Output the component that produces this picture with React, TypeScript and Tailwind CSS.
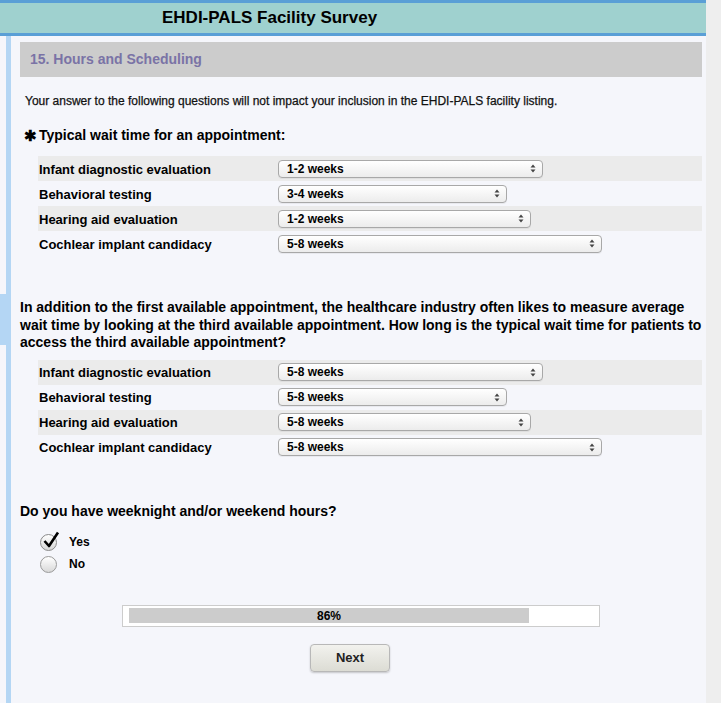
const font = { fontFamily: '"Liberation Sans", Arial, sans-serif' };

const firstSet = [
  { label: "Infant diagnostic evaluation", value: "1-2 weeks", w: "w-[265px]" },
  { label: "Behavioral testing", value: "3-4 weeks", w: "w-[229px]" },
  { label: "Hearing aid evaluation", value: "1-2 weeks", w: "w-[253px]" },
  { label: "Cochlear implant candidacy", value: "5-8 weeks", w: "w-[324px]" },
];

const secondSet = [
  { label: "Infant diagnostic evaluation", value: "5-8 weeks", w: "w-[265px]" },
  { label: "Behavioral testing", value: "5-8 weeks", w: "w-[229px]" },
  { label: "Hearing aid evaluation", value: "5-8 weeks", w: "w-[253px]" },
  { label: "Cochlear implant candidacy", value: "5-8 weeks", w: "w-[324px]" },
];

function FakeSelect({ value, w }: { value: string; w: string }) {
  return (
    <div
      className={`${w} flex h-[18px] items-center justify-between rounded-[4px] border border-[#a8a8a8] bg-gradient-to-b from-white to-[#ececec] pl-[8px] pr-[6px] shadow-[0_1px_0_rgba(0,0,0,0.05)]`}
    >
      <span className="text-[12px] font-bold leading-none text-black">{value}</span>
      <svg width="6" height="9" viewBox="0 0 6 9" className="text-[#444]">
        <path d="M3 0.5 L5.5 3.5 H0.5 Z" fill="currentColor" />
        <path d="M3 8.5 L5.5 5.5 H0.5 Z" fill="currentColor" />
      </svg>
    </div>
  );
}

function Matrix({ rows }: { rows: typeof firstSet }) {
  return (
    <div className="ml-[18px] flex flex-col">
      {rows.map((r, i) => (
        <div
          key={r.label}
          className={`flex h-[25px] items-center ${i % 2 === 0 ? "bg-[#ebebeb]" : ""}`}
        >
          <div className="w-[240px] pl-[1px] pt-[2px] text-[13px] font-bold text-black">{r.label}</div>
          <FakeSelect value={r.value} w={r.w} />
        </div>
      ))}
    </div>
  );
}

export default function App() {
  return (
    <div className="flex min-h-[703px] w-[721px] bg-[#eeeeee]" style={font}>
      <div className="flex w-[706px] flex-col bg-[#f5f6fb]">
        <header className="flex h-[36px] items-center border-y-[3px] border-[#5a9fd6] bg-[#9fd1cf] pl-[162px]">
          <h1 className="text-[17px] font-bold text-black">EHDI-PALS Facility Survey</h1>
        </header>

        <div className="flex flex-1">
          {/* left gutter */}
          <div className="flex w-[11px]">
            <div className="flex w-[6px] flex-col">
              <div className="h-[258px]" />
              <div className="h-[51px] bg-[#b4d6f4]" />
            </div>
            <div className="w-[5px] bg-[#b4d6f4]" />
          </div>

          <main className="flex flex-1 flex-col pl-[9px] pr-[4px]">
            <div className="mt-[6px] flex h-[35px] items-center bg-[#cccccc] pl-[10px]">
              <h2 className="text-[14px] font-bold text-[#7a73a6]">15. Hours and Scheduling</h2>
            </div>

            <p className="mt-[17px] pl-[5px] text-[12px] leading-[15px] text-[#111] [-webkit-text-stroke:0.25px_#111]">
              Your answer to the following questions will not impact your inclusion in the EHDI-PALS facility listing.
            </p>

            <div className="mt-[18px] flex items-center pl-[4px] text-[14px] font-bold leading-[17px] text-black">
              <span className="mr-[2px] text-[15px]">✱</span>
              <span>Typical wait time for an appointment:</span>
            </div>

            <div className="mt-[12px]">
              <Matrix rows={firstSet} />
            </div>

            <p className="mt-[43px] text-[14px] font-bold leading-[17.5px] text-black">
              In addition to the first available appointment, the healthcare industry often likes to measure average
              <br />
              wait time by looking at the third available appointment. How long is the typical wait time for patients to
              <br />
              access the third available appointment?
            </p>

            <div className="mt-[8px]">
              <Matrix rows={secondSet} />
            </div>

            <p className="mt-[43px] text-[14px] font-bold leading-[17px] text-black">
              Do you have weeknight and/or weekend hours?
            </p>

            <div className="ml-[20px] mt-[14px] flex flex-col gap-[5px]">
              <label className="flex h-[17px] items-center">
                <span className="relative flex h-[17px] w-[17px] items-center justify-center rounded-full border border-[#8a8a8a] bg-gradient-to-b from-white to-[#d6d6d6]">
                  <svg
                    width="18"
                    height="18"
                    viewBox="0 0 18 18"
                    className="absolute left-[1px] top-[-4px]"
                  >
                    <path d="M2.5 10 L7 15 L16 1.5" fill="none" stroke="#000" strokeWidth="2.6" strokeLinejoin="round" />
                  </svg>
                </span>
                <span className="ml-[12px] text-[12px] font-bold text-black">Yes</span>
              </label>
              <label className="flex h-[17px] items-center">
                <span className="h-[17px] w-[17px] rounded-full border border-[#9a9a9a] bg-gradient-to-b from-white to-[#d9d9d9]" />
                <span className="ml-[12px] text-[12px] font-bold text-black">No</span>
              </label>
            </div>

            <div className="ml-[102px] mt-[32px] flex h-[22px] w-[478px] items-center border border-[#cccccc] bg-white px-[6px]">
              <div className="flex h-[15px] w-[400px] items-center justify-center bg-[#cccccc]">
                <span className="text-[12px] font-bold leading-none text-black">86%</span>
              </div>
            </div>

            <div className="mt-[17px] flex justify-center pr-[22px]">
              <button className="h-[28px] w-[80px] rounded-[4px] border border-[#b8b8b8] bg-gradient-to-b from-[#f2f2ee] to-[#dcdcd4] text-[13px] font-bold text-[#222] shadow-[0_1px_2px_rgba(0,0,0,0.2)]">
                Next
              </button>
            </div>
          </main>
        </div>
      </div>
      <div className="w-[15px]" />
    </div>
  );
}
